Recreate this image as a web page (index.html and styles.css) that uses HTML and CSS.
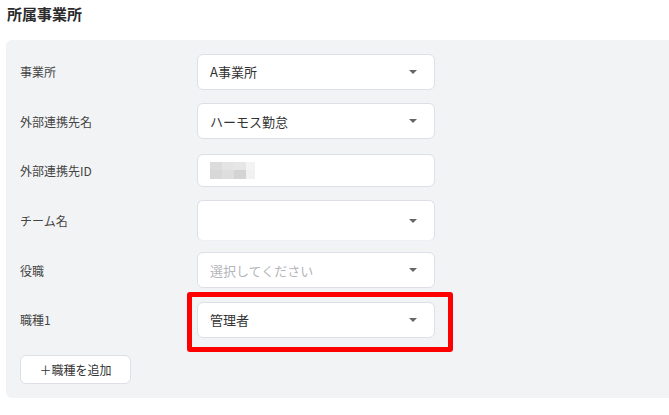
FILE: index.html
```html
<!DOCTYPE html>
<html lang="ja">
<head>
  <meta charset="UTF-8" />
  <title>所属事業所</title>
  <link rel="stylesheet" href="styles.css">
</head>
<body>
  <h2 class="section-title">所属事業所</h2>

  <div class="panel">
    <div class="row">
      <div class="label">事業所</div>
      <div class="field select">
        <span class="value">A事業所</span>
        <span class="caret"></span>
      </div>
    </div>

    <div class="row">
      <div class="label">外部連携先名</div>
      <div class="field select">
        <span class="value">ハーモス勤怠</span>
        <span class="caret"></span>
      </div>
    </div>

    <div class="row">
      <div class="label">外部連携先ID</div>
      <div class="field input">
        <div class="masked">
          <i class="m1"></i><i class="m2"></i><i class="m3"></i><i class="m4"></i>
          <i class="m5"></i><i class="m6"></i><i class="m7"></i><i class="m8"></i>
        </div>
      </div>
    </div>

    <div class="row">
      <div class="label">チーム名</div>
      <div class="field select tall">
        <span class="value"></span>
        <span class="caret"></span>
      </div>
    </div>

    <div class="row">
      <div class="label">役職</div>
      <div class="field select">
        <span class="value placeholder">選択してください</span>
        <span class="caret"></span>
      </div>
    </div>

    <div class="row">
      <div class="label">職種1</div>
      <div class="field select highlighted">
        <span class="value">管理者</span>
        <span class="caret"></span>
      </div>
    </div>

    <button class="add-btn">＋職種を追加</button>
  </div>
</body>
</html>
```

FILE: styles.css
```css
* { box-sizing: border-box; }
body {
  margin: 0;
  overflow: hidden;
  font-family: "Noto Sans CJK JP", "Noto Sans", sans-serif;
  color: #333;
  background: #fff;
}

.section-title {
  margin: 0;
  padding: 4px 0 0 7px;
  height: 40px;
  font-size: 15px;
  line-height: 20px;
  font-weight: 700;
  color: #2b2b2b;
}

/* グレーのパネル */
.panel {
  margin: 0 -6px 0 6px;
  padding: 7px 0 14px 14px;
  background: #f2f3f5;
  border-radius: 6px;
}

.row {
  display: flex;
  align-items: center;
  height: 49.6px;
}
.label {
  width: 177px;
  font-size: 12px;
  color: #444;
}

.field {
  position: relative;
  width: 238px;
  height: 36px;
  background: #fff;
  border: 1px solid #dcdfe6;
  border-radius: 6px;
  display: flex;
  align-items: center;
  padding: 0 12px;
  font-size: 13px;
  color: #333;
}
.field.input { height: 33px; }
.field.tall { height: 41px; border-bottom-color: #eef0f3; }

.value { flex: 1; }
.placeholder { color: #b4b6bb; }

.caret {
  width: 0; height: 0;
  margin-right: 5px;
  border-left: 4px solid transparent;
  border-right: 4px solid transparent;
  border-top: 4px solid #666;
}

/* ぼかしたID */
.masked {
  display: grid;
  grid-template-columns: 12px 12px 12px 9px;
  grid-template-rows: 8px 9px;
  filter: blur(0.6px);
}
.masked i { display: block; }
.m1 { background: #dcdcdc; }
.m2 { background: #e4e4e4; }
.m3 { background: #e6e6e6; }
.m4 { background: #f3f3f3; }
.m5 { background: #d8d8d8; }
.m6 { background: #dedede; }
.m7 { background: #d4d4d4; }
.m8 { background: #f1f1f1; }

/* 赤枠の注釈 */
.highlighted::after {
  content: "";
  position: absolute;
  left: -11px; top: -11px;
  right: -19px; bottom: -15px;
  border: 5px solid #ff0000;
  border-radius: 3px;
}

.add-btn {
  margin-top: 10px;
  width: 111px;
  height: 29px;
  background: #fff;
  border: 1px solid #dcdfe6;
  border-radius: 6px;
  font-family: inherit;
  font-size: 12px;
  color: #333;
  cursor: pointer;
}
```
